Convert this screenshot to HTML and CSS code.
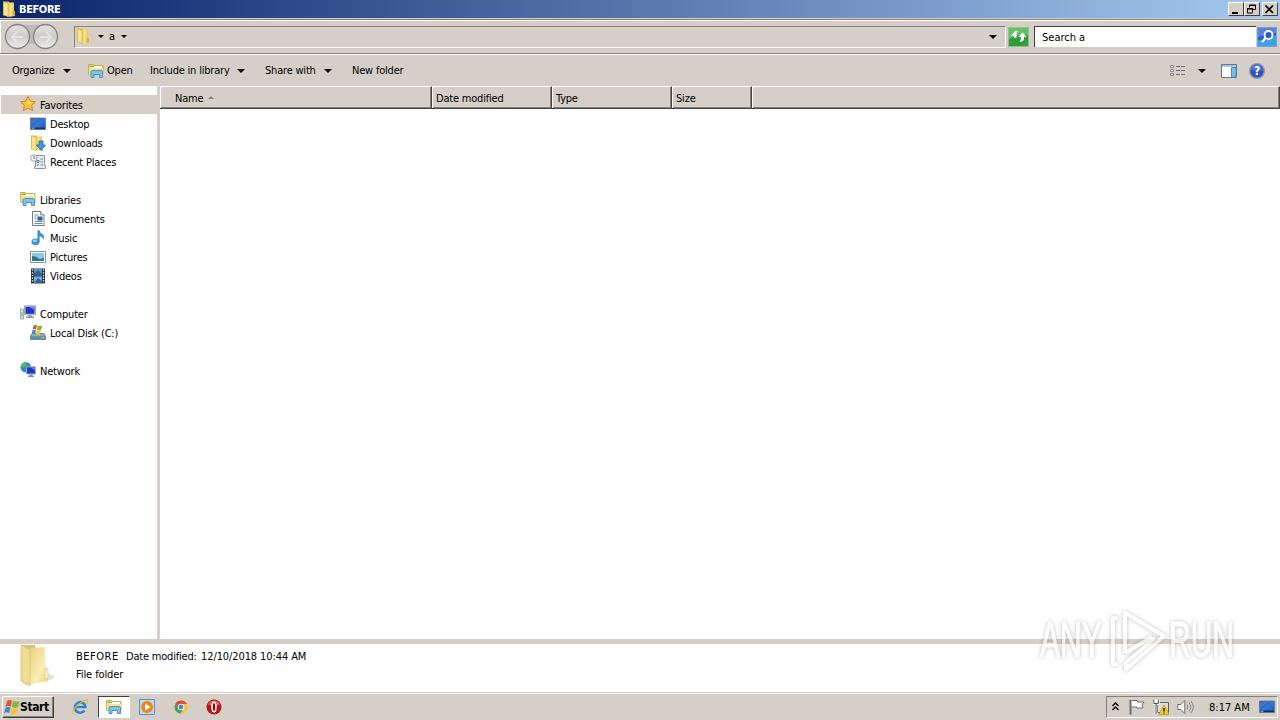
FILE: index.html
```html
<!DOCTYPE html>
<html lang="en">
<head>
    <meta charset="UTF-8">
    <meta name="viewport" content="width=device-width, initial-scale=1.0">
    <title>BEFORE</title>
    <link rel="stylesheet" href="styles.css">
</head>
<body>
    <!-- shared icons -->
    <svg class="defs" width="0" height="0">
        <defs>
            <linearGradient id="gold" x1="0" x2="1" y1="0" y2="0">
                <stop offset="0" stop-color="#d9b548"/>
                <stop offset=".45" stop-color="#f9e58c"/>
                <stop offset="1" stop-color="#e2bb45"/>
            </linearGradient>
            <linearGradient id="pale" x1="0" x2="1" y1="0" y2="1">
                <stop offset="0" stop-color="#e9cf7c"/>
                <stop offset=".6" stop-color="#fbeeb4"/>
                <stop offset="1" stop-color="#ecd27c"/>
            </linearGradient>
            <linearGradient id="screen" x1="0" x2="1" y1="0" y2="1">
                <stop offset="0" stop-color="#1c48a8"/>
                <stop offset=".5" stop-color="#3478d8"/>
                <stop offset="1" stop-color="#2058bc"/>
            </linearGradient>
            <linearGradient id="round" x1="0" x2="0" y1="0" y2="1">
                <stop offset="0" stop-color="#e2e0de"/>
                <stop offset=".5" stop-color="#d0cdc9"/>
                <stop offset="1" stop-color="#efeeec"/>
            </linearGradient>
            <symbol id="folder" viewBox="0 0 16 16">
                <path d="M2 .5h6v14H2z" fill="#e0bb4c"/>
                <path d="M6 1.500h7v8l1 1v4.500l-5 .8H6z" fill="url(#gold)"/>
                <path d="M2.500 .8 7 2.500v13L2.500 14z" fill="#f8e48c" stroke="#cfa83c" stroke-width=".5"/>
                <path d="M11.500 10h2.500v4.500h-2.500z" fill="#d8ae3c"/>
            </symbol>
            <symbol id="libs" viewBox="0 0 16 16">
                <path d="M.5 1.500h5l1 1h8.500v9H.5z" fill="#efd466" stroke="#c79c34" stroke-width=".8"/>
                <path d="M2 3h12v2H2z" fill="#fff"/>
                <path d="M2 3h4v1.200H2z" fill="#5bb56a"/>
                <path d="M.8 5h14.400v6.500H.8z" fill="#f8e382"/>
                <path d="M3 14.500V9q0-1.500 1.500-1.500h8.500q1.500 0 1.500 1.500v5.500h-3v-3H6v3z" fill="#7cc4ec" stroke="#3a8cc4" stroke-width=".9"/>
            </symbol>
            <symbol id="desk" viewBox="0 0 16 16">
                <path d="M.5 2h15v11.500H.5z" fill="url(#screen)" stroke="#5d6f8a" stroke-width=".8"/>
                <path d="M1 2.500h9Q6 5.500 1 8.500z" fill="#6a9ee4" opacity=".4"/>
                <path d="M1 11.500h14v1.500H1z" fill="#162c62"/>
                <path d="M1.500 11.700h3v1h-3z" fill="#7fd0f0"/>
            </symbol>
            <symbol id="flag" viewBox="0 0 16 16">
                <path d="M3 1.500Q5 0 8 1L6.800 7Q4 5.800 1.600 7.500z" fill="#e2572c"/>
                <path d="M9 1.500q3 1.500 6.500 0L14 7.500q-3 1.500-6.200 0z" fill="#7cb83c"/>
                <path d="M1.400 8.500Q4 6.800 6.500 8L5.200 13.500Q2.500 12 .1 14z" fill="#3c86d6"/>
                <path d="M7.500 8.500q3 1.200 6.300-.1L12.500 14Q9 15.500 6.200 14z" fill="#f6c52c"/>
            </symbol>
        </defs>
    </svg>

    <div class="window">
        <!-- title bar -->
        <div class="titlebar">
            <svg class="icon"><use href="#folder"/></svg>
            <span class="title">BEFORE</span>
            <div class="caption-buttons">
                <button class="cap"><svg width="12" height="10"><path d="M3 9h6" stroke="#000" stroke-width="2"/></svg></button>
                <button class="cap"><svg width="12" height="10"><path d="M4.500 3.500V1h6v4.500H8M4 1.500h7M2.500 4.500h5v4.500h-5zM2 5h6" fill="none" stroke="#000"/></svg></button>
                <button class="cap close"><svg width="12" height="10"><path d="M2.500 1.500l7.500 7.500m0-7.500L2.500 9" stroke="#000" stroke-width="1.700"/></svg></button>
            </div>
        </div>

        <!-- address bar -->
        <div class="navbar">
            <svg class="navbuttons" width="58" height="28">
                <path d="M14 2h30v22q-15-6-30 0z" fill="#bcbbbb"/>
                <circle cx="14.500" cy="13.500" r="12" fill="url(#round)" stroke="#838386" stroke-width="1.300"/>
                <circle cx="42.500" cy="13.500" r="12" fill="url(#round)" stroke="#838386" stroke-width="1.300"/>
                <path d="M20 14H9m5-5-5 5 5 5" fill="none" stroke="#e6e4e2" stroke-width="2"/>
                <path d="M37 14h11m-5-5 5 5-5 5" fill="none" stroke="#e6e4e2" stroke-width="2"/>
            </svg>
            <div class="address">
                <svg class="icon"><use href="#folder"/></svg>
                <i class="arrow small first"></i>
                <span>a</span>
                <i class="arrow small"></i>
                <i class="arrow last"></i>
            </div>
            <svg class="refresh" width="21" height="20">
                <rect x=".5" y=".5" width="20" height="19" fill="#2f9e3b" stroke="#8fc28c"/>
                <path d="M1 1h19v7Q10 7 1 12z" fill="#68bf69"/>
                <path d="M6 11V9H3l4-5h3L8.500 6.500v4.500zM11.500 15l1.500-3v-2h-2.500l4-4.500 4 4.500H16v2q-1 3-4.500 3z" fill="#fff"/>
            </svg>
            <div class="search">Search a</div>
            <svg class="find" width="20" height="20">
                <rect x=".5" y=".5" width="19" height="19" fill="#2a62cc" stroke="#7c9bdc"/>
                <path d="M1 13q9 2 18-5v11H1z" fill="#3da4e4"/>
                <path d="M1 1h18v5Q10 6 1 10z" fill="#5a84dc"/>
                <circle cx="11.500" cy="8" r="4" fill="#2c5cc4" stroke="#fff" stroke-width="1.800"/>
                <path d="M8.500 11 5 15" stroke="#fff" stroke-width="2.400"/>
            </svg>
        </div>

        <!-- command bar -->
        <div class="toolbar">
            <span class="cmd organize">Organize</span><i class="arrow"></i>
            <svg class="icon open-icon"><use href="#libs"/></svg>
            <span class="cmd open">Open</span>
            <span class="cmd include">Include in library</span><i class="arrow"></i>
            <span class="cmd share">Share with</span><i class="arrow"></i>
            <span class="cmd newfolder">New folder</span>
            <div class="views">
                <svg width="16" height="14">
                    <path d="M.5 1.500h3v2h-3zM.5 5.500h3v2h-3zM.5 9.500h3v2h-3z" fill="#fff" stroke="#7c7f88" stroke-width=".9"/>
                    <path d="M6 2.500h4m1 0h4M6 6.500h4m1 0h4M6 10.500h4m1 0h4" stroke="#6f7078"/>
                </svg>
                <i class="arrow"></i>
                <svg class="pane" width="16" height="14">
                    <path d="M.5 .5h15v13H.5z" fill="#fff" stroke="#5c7896"/>
                    <path d="M1 1h14v2H1z" fill="#a8c8e2"/>
                    <path d="M10.500 3.500h4.500v9.500h-4.500z" fill="#7cc2e4" stroke="#4c86ac"/>
                </svg>
                <svg class="help" width="16" height="16">
                    <circle cx="8" cy="8" r="7.300" fill="#2f55b8" stroke="#8a96ae" stroke-width="1.400"/>
                    <path d="M2 7a6 6 0 0 1 12 0Q8 9 2 7z" fill="#4c70c8"/>
                    <text x="8" y="12.300" text-anchor="middle" fill="#fff" font-size="12" font-weight="bold">?</text>
                </svg>
            </div>
        </div>

        <div class="main">
            <!-- navigation tree -->
            <div class="sidebar">
                <div class="node root selected">
                    <svg class="icon" viewBox="0 0 16 16"><path d="M8 .3l2.200 4.900 5.200.6-3.800 3.600 1 5.200L8 12l-4.600 2.600 1-5.200L.6 5.800l5.200-.6z" fill="#fbc53a" stroke="#e07d1c"/><path d="M8 2.500l1.300 3.500 3 .5L8 8z" fill="#fff0a0"/></svg>
                    <span>Favorites</span>
                </div>
                <div class="node"><svg class="icon"><use href="#desk"/></svg><span>Desktop</span></div>
                <div class="node">
                    <svg class="icon" viewBox="0 0 16 16"><use href="#folder" width="16" height="16" x="-1"/><path d="M9 6h4v4h2.500L11 15.500 6.500 10H9z" fill="#3c9ae0" stroke="#1c62ac" stroke-width=".8"/></svg>
                    <span>Downloads</span>
                </div>
                <div class="node">
                    <svg class="icon" viewBox="0 0 16 16"><path d="M5.500 1.500h9v10h1v3h-11v-2h1z" fill="#e6ecf2" stroke="#7c8a98" stroke-width=".9"/><path d="M7 6.500h2v2H7zM10.500 5h2.500M10.500 8h2.500M7 11h2m1.500 0H13" fill="none" stroke="#5a7490" stroke-width=".9"/><circle cx="3.800" cy="4" r="3.300" fill="#f4f6f8" stroke="#8e98a4" stroke-width=".9"/><path d="M3.800 2v2.200h1.700" fill="none" stroke="#555" stroke-width=".8"/></svg>
                    <span>Recent Places</span>
                </div>

                <div class="node root group"><svg class="icon"><use href="#libs"/></svg><span>Libraries</span></div>
                <div class="node">
                    <svg class="icon" viewBox="0 0 16 16"><path d="M2.500 .5h8l3.500 3.500v10.500H2.500z" fill="#fff" stroke="#707c8c"/><path d="M10.500 .5V4H14" fill="#d4dce6" stroke="#707c8c" stroke-width=".8"/><path d="M4.500 4h4M4.500 6h2M4.500 8h2M4.500 10.500h8M4.500 12.500h8" stroke="#6c8cb4"/><path d="M7.500 5.500h5v4h-5z" fill="#2c5c9c"/></svg>
                    <span>Documents</span>
                </div>
                <div class="node">
                    <svg class="icon" viewBox="0 0 16 16"><ellipse cx="5.500" cy="11.800" rx="4" ry="3.400" fill="#3a94d8"/><path d="M7.500 12V.3h2q.3 2.500 3 4t.8 5.500q-.3-3-3.700-3.600V12z" fill="#3a90d4"/><ellipse cx="4.800" cy="10.800" rx="2" ry="1.300" fill="#9fdcf8"/></svg>
                    <span>Music</span>
                </div>
                <div class="node">
                    <svg class="icon" viewBox="0 0 16 16"><path d="M.5 2.500h15v11H.5z" fill="#fff" stroke="#8090a0"/><path d="M2 4h12v8H2z" fill="#8cc8ec"/><path d="M2 7q4 0 6 2t6-.5V12H2z" fill="#2a7a6c"/><path d="M2 10.500h12V12H2z" fill="#3a78b4"/></svg>
                    <span>Pictures</span>
                </div>
                <div class="node">
                    <svg class="icon" viewBox="0 0 16 16"><path d="M1 .5h14v15H1z" fill="#2c2f36"/><path d="M4 1h8v6.500H4z" fill="#4c98d4"/><path d="M4 8.500h8V15H4z" fill="#6ab4e4"/><path d="M4 5l4-3 4 4v1.500H4zM5 14l3-4 4 3v2H5z" fill="#386090"/><path d="M2.500 1.500v14M13.500 1.500v14" stroke="#fff" stroke-width="1.300" stroke-dasharray="1.300 1.400"/></svg>
                    <span>Videos</span>
                </div>

                <div class="node root group">
                    <svg class="icon" viewBox="0 0 16 16"><path d="M.5 4h3v10h-3z" fill="#dfe3e6" stroke="#8c949c" stroke-width=".8"/><path d="M1.500 7.500h1v4h-1z" fill="#58b04c"/><path d="M4.500 .8h11v9h-11z" fill="#d8dce4" stroke="#8c94a4" stroke-width=".8"/><path d="M5.500 1.800h9v7h-9z" fill="#2036c0"/><path d="M9 1.800h5.500v3.500z" fill="#6c88e4"/><path d="M8.500 10h3v1.500H14V13H6v-1.500h2.500z" fill="#8c94a0"/></svg>
                    <span>Computer</span>
                </div>
                <div class="node">
                    <svg class="icon" viewBox="0 0 16 16"><path d="M2 8.500h12l1.500 2.500v3.500H.5V11z" fill="#8cacbc" stroke="#5c7484" stroke-width=".8"/><path d="M1 11.300h14v2.700H1z" fill="#5c8ca4"/><path d="M11.500 12h2.500v1.200h-2.500z" fill="#8ce45c"/><use href="#flag" x="1.500" y="-.5" width="11" height="11"/></svg>
                    <span>Local Disk (C:)</span>
                </div>

                <div class="node root group">
                    <svg class="icon" viewBox="0 0 16 16"><circle cx="5.800" cy="5.300" r="5.300" fill="#2b8cc4"/><path d="M2 2q3-2.500 5-1.500L6 3.500 3 6 1 4.500zM7 5.500l3-2 1 2-3 4z" fill="#58b858"/><path d="M6.500 4.800h9v7.200h-9z" fill="#2238c0" stroke="#a4acbc"/><path d="M10 5.300h5v3z" fill="#6484e4"/><path d="M9.500 12.500h3v1.300h1.500V15H8v-1.200h1.500z" fill="#7c8ca8"/></svg>
                    <span>Network</span>
                </div>
            </div>

            <!-- file list -->
            <div class="content">
                <div class="columns">
                    <div class="col name">Name<i class="sort"></i></div>
                    <div class="col date">Date modified</div>
                    <div class="col type">Type</div>
                    <div class="col size">Size</div>
                    <div class="col rest"></div>
                </div>
            </div>
        </div>

        <!-- details pane -->
        <div class="details">
            <svg class="bigfolder" width="42" height="44" viewBox="0 0 42 44">
                <path d="M26 28l10 3q7 3-8 7z" fill="#e2e2e0"/>
                <path d="M5 1h14v38l-8 2-6-4z" fill="#dcc07c"/>
                <path d="M14 4l15-1v19l3 3v12l-18 3z" fill="url(#pale)"/>
                <path d="M5 1l9 5v36L5 36z" fill="#f1dc98" stroke="#dcc070" stroke-width=".8"/>
                <path d="M29 25h3v9l-3 1z" fill="#fff6d8" stroke="#d9bc64" stroke-width=".6"/>
            </svg>
            <div class="info">
                <div class="line"><span class="fname">BEFORE</span><span class="label">Date modified:</span><span class="when">12/10/2018 10:44 AM</span></div>
                <div class="line"><span class="kind">File folder</span></div>
            </div>
        </div>

        <!-- taskbar -->
        <div class="taskbar">
            <button class="start"><svg width="16" height="17"><use href="#flag"/></svg><span>Start</span></button>
            <div class="tasks">
                <div class="task">
                    <svg class="icon" viewBox="0 0 16 16"><path d="M12.500 11.500A5.300 5.300 0 1 1 13.400 8H4" fill="none" stroke="#2a86d4" stroke-width="2.600"/><path d="M1.500 15Q-1 12 6 6t9.500-5q1 1-1 4" fill="none" stroke="#e8b83c" stroke-width="1.200"/></svg>
                </div>
                <div class="task active"><svg class="icon"><use href="#libs"/></svg></div>
                <div class="task">
                    <svg class="icon" viewBox="0 0 16 16"><path d="M.5 .5h15v15H.5z" fill="#b8dcf4" stroke="#4c94cc"/><circle cx="8" cy="8" r="6" fill="#f08418"/><path d="M6 4.500l5.500 3.500L6 11.500z" fill="#fff"/></svg>
                </div>
                <div class="task">
                    <svg class="icon" viewBox="0 0 16 16"><circle cx="8" cy="8" r="6.500" fill="#f4c62c"/><path d="M2.300 5A6.500 6.500 0 0 1 13.900 5H8L6 10z" fill="#dc4a3c"/><path d="M2.300 5A6.500 6.500 0 0 0 7.500 14.500L10 10 5.500 9z" fill="#3ca454"/><circle cx="8" cy="8" r="3.200" fill="#fff"/><circle cx="8" cy="8" r="2.400" fill="#4484e4"/></svg>
                </div>
                <div class="task">
                    <svg class="icon" viewBox="0 0 16 16"><circle cx="8" cy="8" r="7.500" fill="#b8141c"/><path d="M2 5.500a6.500 6.500 0 0 1 12 0Q8 8 2 5.500z" fill="#dc5a58"/><ellipse cx="8" cy="8" rx="2" ry="4.800" fill="#8c0a10" stroke="#fff" stroke-width="1.500"/></svg>
                </div>
            </div>
            <div class="tray">
                <svg class="chevrons" width="7" height="9"><path d="M.5 4l3-3 3 3M.5 8l3-3 3 3" fill="none" stroke="#000" stroke-width="1.300"/></svg>
                <svg class="action" width="16" height="16"><path d="M1.500 1v14.500" stroke="#6c6c6c" stroke-width="2"/><path d="M2.500 1.500h6v1.500h6.500l-2 3 1 3H8V8H3" fill="#fff" stroke="#6c6c6c"/></svg>
                <svg class="net" width="16" height="16"><path d="M4.500 3.500h11v10h-11z" fill="#dcdcdc" stroke="#606060"/><path d="M.8 .5v4h4.500v-4M3 .5v3M3 4.500v10.500" fill="none" stroke="#fff" stroke-width="2.500"/><path d="M.8 .5v4h4.500v-4M3 4.500v10.500" fill="none" stroke="#505050"/><path d="M11 6l5 9.500H6z" fill="#fcd41c" stroke="#b08c00" stroke-width=".7"/><path d="M11 9v3.500m0 1v1" stroke="#000" stroke-width="1.300"/></svg>
                <svg class="sound" width="17" height="16"><path d="M.8 5.500h3l4-4v13l-4-4h-3z" fill="#fff" stroke="#6c6c6c"/><path d="M10 5.500q2 2.500 0 5M12 3.500q3.500 4.500 0 9M14 2q4.500 6 0 12" fill="none" stroke="#7c7c7c" stroke-width=".9"/></svg>
                <span class="clock">8:17 AM</span>
                <svg class="icon showdesk"><use href="#desk"/></svg>
            </div>
        </div>
    </div>

    <!-- watermark over the window -->
    <div class="watermark">
        <span class="word">ANY</span>
        <svg width="66" height="76" viewBox="72 0 66 76">
            <path d="M87 14h-5v46h5M94 49V9l39 23-38 33v-6l29-25M94 49l27-16" fill="none" stroke="#fff" stroke-width="4" stroke-linejoin="round"/>
        </svg>
        <span class="word">RUN</span>
    </div>
</body>
</html>
```
FILE: styles.css
```css
* {
    box-sizing: border-box;
}

body {
    margin: 0;
    width: 1280px;
    height: 720px;
    overflow: hidden;
    background: #d5cfc7;
    color: #000;
    font-family: "DejaVu Sans Condensed", "DejaVu Sans", sans-serif;
    font-stretch: condensed;
    font-size: 11px;
    letter-spacing: -0.2px;
    white-space: nowrap;
}

svg {
    display: block;
    flex: none;
}

.defs {
    position: absolute;
}

.icon {
    width: 16px;
    height: 16px;
}

.window {
    display: flex;
    flex-direction: column;
    height: 720px;
}

/* small black triangle used by all the dropdowns */
.arrow {
    flex: none;
    width: 0;
    height: 0;
    border: 4px solid transparent;
    border-top-color: #000;
    border-bottom: 0;
}

.arrow.small {
    border-width: 3px;
    border-bottom: 0;
}

/* title bar */
.titlebar {
    display: flex;
    align-items: center;
    height: 18px;
    padding: 0 2px 0 1px;
    background: linear-gradient(90deg, #0a246a, #a6caf0);
}

.title {
    margin-left: 2px;
    color: #fff;
    font-weight: bold;
    letter-spacing: -0.4px;
}

.caption-buttons {
    display: flex;
    margin-left: auto;
}

.cap {
    width: 16px;
    height: 14px;
    padding: 0;
    background: #d5cfc7;
    border: 1px solid;
    border-color: #fff #404040 #404040 #fff;
}

.cap.close {
    margin-left: 2px;
}

/* address bar */
.navbar {
    display: flex;
    align-items: center;
    height: 36px;
    margin-top: 1px;
    padding: 0 0 1px 3px;
    border-top: 1px solid #85817b;
    border-bottom: 1px solid #fff;
    box-shadow: inset 0 1px #fff, inset 0 -1px #85817b, inset 1px 0 #fff;
}

.address {
    display: flex;
    align-items: center;
    width: 932px;
    height: 22px;
    margin-left: 13px;
    border: 1px solid;
    border-color: #85817b #fff #fff #85817b;
}

.address .icon {
    margin-top: -2px;
}

.address .first {
    margin: 0 5px 0 7px;
}

.address span + .arrow {
    margin-left: 6px;
}

.address .last {
    margin: 0 8px 0 auto;
}

.refresh {
    margin-left: 2px;
}

.search {
    width: 222px;
    height: 21px;
    margin-left: 5px;
    padding: 3px 0 0 7px;
    background: #fff;
    border-top: 1px solid #404040;
    border-left: 1px solid #404040;
    line-height: 15px;
    letter-spacing: 0;
}

.find {
    margin-left: 1px;
}

/* command bar */
.toolbar {
    display: flex;
    align-items: center;
    height: 31px;
    padding-left: 12px;
}

.organize {
    width: 51px;
}

.open-icon {
    margin-left: 17px;
}

.open {
    width: 43px;
    margin-left: 3px;
}

.include {
    width: 87px;
}

.share {
    width: 59px;
    margin-left: 20px;
}

.newfolder {
    margin-left: 20px;
}

.views {
    display: flex;
    align-items: center;
    margin-left: auto;
    padding-right: 15px;
}

.views .arrow {
    margin-left: 12px;
}

.pane {
    margin-left: 15px;
}

.help {
    margin-left: 12px;
}

/* tree + list */
.main {
    display: flex;
    height: 553px;
}

.sidebar {
    width: 160px;
    padding-top: 9px;
    background: #fff;
    border-right: 3px solid #d5cfc7;
}

.node {
    display: flex;
    align-items: center;
    gap: 4px;
    height: 19px;
    padding-left: 30px;
}

.node .icon {
    margin-top: 1px;
}

.root .icon {
    margin: 0 0 1px;
}

.node span {
    padding-top: 2px;
}

.root {
    padding-left: 20px;
}

.group {
    margin-top: 19px;
}

.selected {
    margin-left: 1px;
    padding-left: 19px;
    background: #d5cfc7;
}

.content {
    flex: 1;
    background: #fff;
}

.columns {
    display: flex;
    height: 23px;
}

.col {
    display: flex;
    align-items: center;
    padding: 2px 0 0 4px;
    background: #d5cfc7;
    border: 1px solid;
    border-color: #fff #404040 #404040 #fff;
    border-left-width: 0;
    box-shadow: inset 1px 0 #fff, inset -1px -1px #85817b;
}

.name {
    width: 272px;
    padding-left: 15px;
}

.date,
.type {
    width: 120px;
}

.size {
    width: 80px;
}

.rest {
    flex: 1;
}

.sort {
    width: 0;
    height: 0;
    margin: -3px 0 0 5px;
    border: 3px solid transparent;
    border-bottom-color: #85817b;
    border-top: 0;
}

/* details pane */
.details {
    display: flex;
    height: 53px;
    background: #fff;
    border-top: 5px solid #d5cfc7;
}

.bigfolder {
    margin-left: 16px;
}

.info {
    padding: 4px 0 0 18px;
    letter-spacing: -0.1px;
}

.line {
    display: flex;
    height: 18px;
    line-height: 18px;
}

.fname {
    width: 50px;
    letter-spacing: 0.5px;
}

.label {
    width: 75px;
    letter-spacing: -0.2px;
}

/* taskbar */
.taskbar {
    display: flex;
    align-items: center;
    height: 28px;
    border-top: 1px solid #d5cfc7;
    box-shadow: inset 0 1px #fff;
}

.start {
    display: flex;
    align-items: center;
    width: 52px;
    height: 22px;
    margin: 1px 0 0 2px;
    padding: 0 1px;
    background: #d5cfc7;
    border: 1px solid;
    border-color: #fff #404040 #404040 #fff;
    box-shadow: inset -1px -1px #85817b;
    font-family: inherit;
    font-size: 12px;
    font-weight: bold;
    letter-spacing: -0.4px;
}

.tasks {
    display: flex;
    margin: 1px 0 0 10px;
}

.task {
    display: flex;
    align-items: center;
    justify-content: center;
    width: 32px;
    height: 22px;
    margin-right: 1.5px;
}

.active {
    background: #fff;
    border: 1px solid;
    border-color: #404040 #fff #fff #404040;
}

.tray {
    display: flex;
    align-items: center;
    width: 172px;
    height: 22px;
    margin: 1px 2px 0 auto;
    padding-left: 5px;
    border: 1px solid;
    border-color: #85817b #fff #fff #85817b;
}

.chevrons {
    margin-top: -2px;
}

.action {
    margin-left: 10px;
}

.net,
.sound {
    margin-left: 8px;
}

.clock {
    width: 45px;
    margin-left: 15px;
    letter-spacing: 0;
}

.showdesk {
    margin-left: 5px;
}

/* watermark */
.watermark {
    position: absolute;
    left: 1040px;
    top: 604px;
    display: flex;
    height: 76px;
    opacity: 0.65;
    filter: drop-shadow(0 0 2px rgba(0, 0, 0, 0.4));
}

.word {
    width: 63px;
    height: 76px;
    color: #fff;
    font-family: "Liberation Sans", sans-serif;
    font-size: 50px;
    line-height: 73px;
    letter-spacing: 0;
    -webkit-text-stroke: 1px #fff;
    transform: scaleX(0.6);
    transform-origin: 0 0;
}
```
